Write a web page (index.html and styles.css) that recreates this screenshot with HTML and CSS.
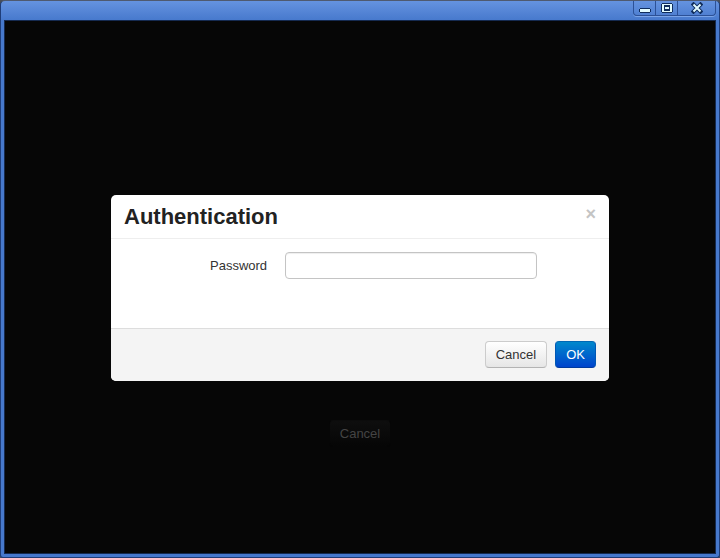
FILE: index.html
```html
<!DOCTYPE html>
<html lang="en">
<head>
<meta charset="utf-8">
<meta name="viewport" content="width=device-width, initial-scale=1">
<title>Authentication</title>
<link rel="stylesheet" href="styles.css">
</head>
<body>
<div class="window">
  <header class="titlebar">
    <div class="window-controls">
      <button type="button" class="control" aria-label="Minimize">
        <svg width="12" height="12" viewBox="0 0 12 12"><path d="M1 6h10v1h1v3h-1v1H1v-1H0V7h1z" fill="#102d5c"/><path d="M1 7h10v3H1z" fill="#e2fbff"/></svg>
      </button>
      <button type="button" class="control" aria-label="Maximize">
        <svg width="12" height="12" viewBox="0 0 12 12"><path d="M1 1h10v1h1v8h-1v1H1v-1H0V2h1z" fill="#102d5c"/><path d="M1 2h10v8H1z" fill="#e2fbff"/><path d="M3 3h6v6H3z" fill="#102d5c"/><path d="M4 5h4v2H4z" fill="#e2fbff"/></svg>
      </button>
      <button type="button" class="control control-close" aria-label="Close window">
        <svg width="12" height="12" viewBox="0 0 12 12"><path d="M2.500 2.500l7 7M9.500 2.500l-7 7" stroke="#102d5c" stroke-width="4" stroke-linecap="square"/><path d="M2.500 2.500l7 7M9.500 2.500l-7 7" stroke="#e2fbff" stroke-width="2" stroke-linecap="butt"/></svg>
      </button>
    </div>
  </header>
  <main class="stage">
    <form class="dialog" role="dialog" aria-labelledby="dialog-title">
      <div class="dialog-header">
        <h1 id="dialog-title">Authentication</h1>
        <button type="button" class="dismiss" aria-label="Close">×</button>
      </div>
      <div class="dialog-body">
        <label for="password">Password</label>
        <input id="password" type="password">
      </div>
      <div class="dialog-footer">
        <button type="button" class="btn">Cancel</button>
        <button type="submit" class="btn btn-primary">OK</button>
      </div>
    </form>
    <button type="button" class="btn btn-dimmed">Cancel</button>
  </main>
</div>
</body>
</html>
```
FILE: styles.css
```css
* {
  box-sizing: border-box;
}

body {
  margin: 0;
  background: #4a4f58;
  font: 13px/18px "Liberation Sans", Arial, sans-serif;
  color: #333;
}

button,
input {
  margin: 0;
  font: inherit;
}

.window {
  display: flex;
  flex-direction: column;
  min-height: 100vh;
  padding: 0 3px 3px;
  border: 1px solid #1f3d78;
  border-top-color: #4f5a70;
  border-radius: 5px 5px 3px 3px;
  background: linear-gradient(#6593e0, #4678cc 20px);
}

.titlebar {
  display: flex;
  justify-content: flex-end;
  height: 19px;
}

.window-controls {
  display: flex;
  height: 15px;
  border: 1px solid #2c5197;
  border-top: 0;
  border-radius: 0 0 4px 4px;
  box-shadow: 0 1px #7ba4e7;
}

.control {
  display: flex;
  align-items: center;
  justify-content: center;
  width: 22px;
  padding: 0;
  border: 0;
  border-right: 1px solid #2c5197;
  background: none;
}

.control-close {
  width: 37px;
  border-right: 0;
}

.stage {
  display: flex;
  flex: 1;
  flex-direction: column;
  align-items: center;
  padding: 174px 0 32px;
  border: 1px solid #152a50;
  background: #060606;
}

.dialog {
  width: calc(100% - 212px);
  margin-bottom: 39px;
  overflow: hidden;
  border-radius: 5px;
  background: #fff;
}

.dialog-header {
  display: flex;
  justify-content: space-between;
  padding: 7px 13px 6px;
  border-bottom: 1px solid #eee;
}

.dialog-header h1 {
  margin: 0;
  font-size: 22px;
  line-height: 30px;
  color: #222;
}

.dismiss {
  align-self: flex-start;
  padding: 2px 0 0;
  border: 0;
  background: none;
  font-size: 18px;
  font-weight: bold;
  line-height: 20px;
  color: #c4c4c4;
}

.dialog-body {
  display: flex;
  align-items: center;
  gap: 18px;
  padding: 13px 72px 49px 13px;
}

.dialog-body label {
  flex: 1;
  text-align: right;
}

.dialog-body input {
  width: 61%;
  height: 27px;
  padding: 4px;
  border: 1px solid #c4c4c4;
  border-radius: 4px;
  background: #fff;
  box-shadow: inset 0 1px 1px #eee;
}

.dialog-footer {
  display: flex;
  justify-content: flex-end;
  gap: 8px;
  padding: 12px 13px 13px;
  border-top: 1px solid #ddd;
  background: #f4f4f4;
}

.btn {
  height: 27px;
  padding: 0 10px;
  border: 1px solid #ccc;
  border-bottom-color: #b3b3b3;
  border-radius: 4px;
  background: linear-gradient(#fff, #e6e6e6);
  color: #333;
}

.btn-primary {
  border-color: #0068b4 #0058b4 #003a9e;
  background: linear-gradient(#0088cc, #0044cc);
  color: #fff;
}

.btn-dimmed {
  border-color: #0c0c0c #060606 #060606;
  background: linear-gradient(#0e0e0e, #060606);
  color: #444;
}
```
